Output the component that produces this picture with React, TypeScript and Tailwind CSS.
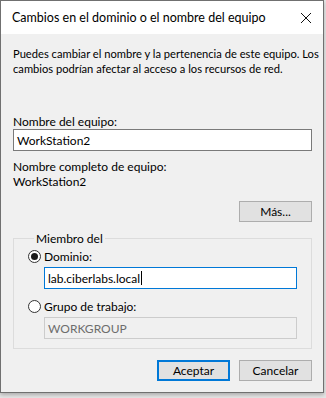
import React from "react";

const font = { fontFamily: 'Lato, "Liberation Sans", Arial, sans-serif' };

function Radio({ checked }: { checked?: boolean }) {
  return (
    <span className="flex h-[13px] w-[13px] shrink-0 items-center justify-center rounded-full border border-[#333333] bg-white">
      {checked && <span className="h-[7px] w-[7px] rounded-full bg-[#1a1a1a]" />}
    </span>
  );
}

function Button({ label, primary }: { label: string; primary?: boolean }) {
  return (
    <button
      type="button"
      className={
        "flex h-[21px] w-[73px] items-center justify-center bg-[#e1e1e1] text-[12px] leading-none text-black " +
        (primary ? "border-2 border-[#0078d7]" : "border border-[#adadad]")
      }
    >
      {label}
    </button>
  );
}

export default function App() {
  return (
    <div className="flex h-[398px] w-[326px] items-start overflow-hidden bg-[#e6e6e6]" style={font}>
      <div className="flex w-[324px] flex-col border border-[#707070] bg-[#f0f0f0] text-[12px] leading-[15px] text-black shadow-[0_2px_4px_rgba(0,0,0,0.25)]">
        {/* title bar */}
        <div className="flex h-[33px] items-center justify-between bg-white pl-[11px] pr-[9px]">
          <span className="whitespace-nowrap text-[12.5px]">Cambios en el dominio o el nombre del equipo</span>
          <svg width="12" height="12" viewBox="0 0 12 12" className="mr-[2px]">
            <path d="M1 1 L11 11 M11 1 L1 11" stroke="#111" strokeWidth="1" fill="none" />
          </svg>
        </div>

        <div className="flex flex-col pb-[11px] pl-[12px] pr-[11px] pt-[12px]">
          <p className="origin-left scale-x-[0.93] whitespace-nowrap">
            Puedes cambiar el nombre y la pertenencia de este equipo. Los
            <br />
            cambios podrían afectar al acceso a los recursos de red.
          </p>

          <label className="mt-[38px]">Nombre del equipo:</label>
          <div className="flex h-[22px] items-center border border-[#7a7a7a] bg-white pl-[3px]">
            WorkStation2
          </div>

          <div className="mt-[8px]">Nombre completo de equipo:</div>
          <div>WorkStation2</div>

          <div className="mt-[12px] flex justify-end">
            <Button label="Más..." />
          </div>

          <fieldset className="mt-[9px] border border-[#dcdcdc] pb-[9px] pl-[14px] pr-[14px]">
            <legend className="ml-[6px] px-[2px]">Miembro del</legend>

            <div className="mt-[3px] flex items-center gap-[3px]">
              <Radio checked />
              <span>Dominio:</span>
            </div>
            <div className="ml-[16px] mt-[3px] flex h-[22px] items-center border border-[#0078d7] bg-white pl-[3px]">
              lab.ciberlabs.local
              <span className="ml-px h-[14px] w-px bg-black" />
            </div>

            <div className="mt-[10px] flex items-center gap-[3px]">
              <Radio />
              <span>Grupo de trabajo:</span>
            </div>
            <div className="ml-[16px] mt-[3px] flex h-[22px] items-center border border-[#cccccc] bg-[#f0f0f0] pl-[3px] text-[#6d6d6d]">
              WORKGROUP
            </div>
          </fieldset>

          <div className="mt-[11px] flex justify-end gap-[9px]">
            <Button label="Aceptar" primary />
            <Button label="Cancelar" />
          </div>
        </div>
      </div>
    </div>
  );
}
